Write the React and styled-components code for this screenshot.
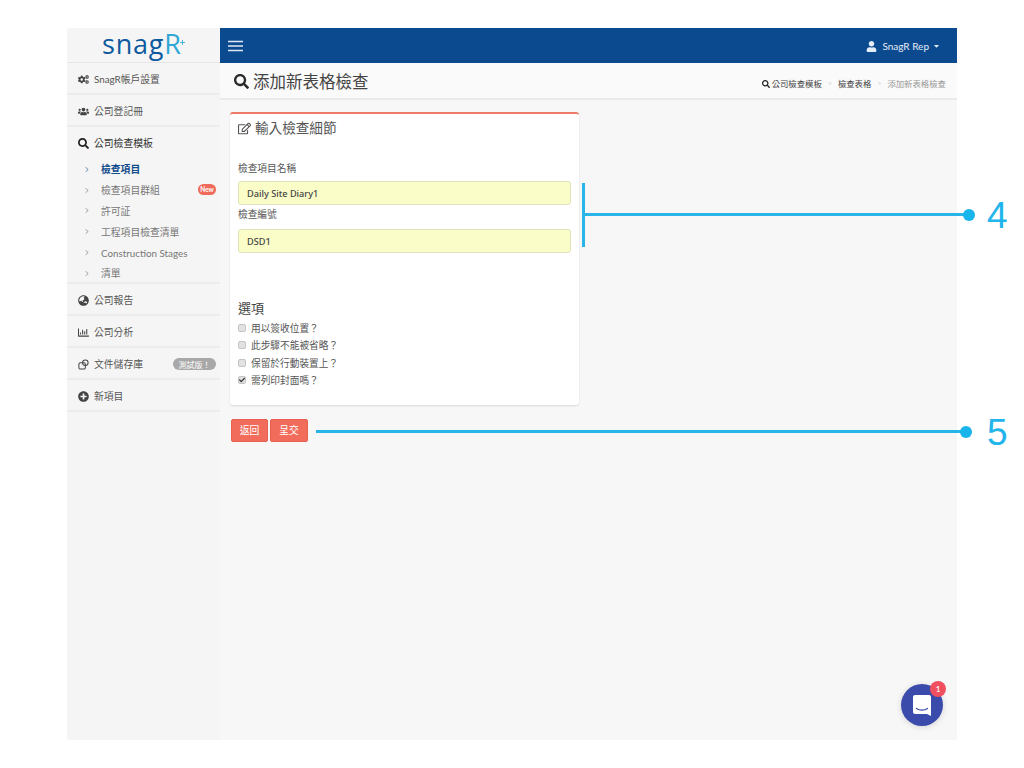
import React from "react";
import styled, { createGlobalStyle } from "styled-components";
import { FaCogs, FaUsers, FaSearch, FaGlobeAsia, FaRegChartBar, FaPlusCircle, FaRegEdit, FaUser, FaCaretDown, FaCheck } from "react-icons/fa";
import { FiChevronRight } from "react-icons/fi";

const Global = createGlobalStyle`
  html, body { margin: 0; padding: 0; background: #fff; }
  body { font-family: Lato, "Noto Sans CJK TC", sans-serif; color: #555; }
  * { box-sizing: border-box; }
`;
const Canvas = styled.div`position: relative; width: 1024px; height: 768px; padding: 28px 67px; overflow: hidden;`;
const Frame = styled.div`display: flex; width: 890px; height: 712px; background: #f7f7f7;`;
const Sidebar = styled.aside`width: 153px; flex: none; background: #f5f5f5;`;
const Logo = styled.div`height: 35px; display: flex; align-items: center; justify-content: center; border-bottom: 1px solid #e6e6e6; padding: 0 0 3px 0;`;
const LogoText = styled.span`font-family: "Open Sans", sans-serif; font-size: 27px; line-height: 30px; letter-spacing: .8px; color: #0d5a9e;`;
const LogoR = styled.span`color: #2fa8d5; letter-spacing: 0;`;
const LogoMark = styled.svg`width: 5px; height: 5px; margin: 0 0 2px -1px; align-self: center;`;
const MenuRow = styled.div`height: 32px; display: flex; align-items: center; padding: ${p => p.$flat ? "0" : "2px"} 0 0 11px; gap: 5px; font-size: 9.8px; color: ${p => p.$dark ? "#333" : "#555"}; border-bottom: ${p => p.$flat ? "none" : "2px solid #ececec"}; position: relative;
  > svg { width: 11px; height: 11px; flex: none; color: ${p => p.$dark ? "#222" : "#444"}; }`;
const SubMenu = styled.div`height: 125px; display: flex; flex-direction: column; border-bottom: 2px solid #ececec;`;
const SubRow = styled.div`height: 20.8px; flex: none; display: flex; align-items: center; padding-left: 16px; gap: 10px; font-size: 9.8px; font-weight: ${p => p.$on ? 700 : 400}; color: ${p => p.$on ? "#0f4a8a" : "#777"}; position: relative;
  svg { width: 8px; height: 9px; color: ${p => p.$on ? "#0f4a8a" : "#666"}; flex: none; }`;
const NewBadge = styled.span`position: absolute; right: 4px; top: 4px; width: 18px; height: 11px; border-radius: 6px; background: #ef6a5a; color: #fff; font-size: 6.5px; font-weight: 700; display: flex; align-items: center; justify-content: center;`;
const BetaBadge = styled.span`position: absolute; right: 4px; top: 10px; width: 43px; height: 12px; border-radius: 6px; background: #a8a8a8; color: #fff; font-size: 8px; font-weight: 400; display: flex; align-items: center; justify-content: center;`;
const Main = styled.main`flex: 1; display: flex; flex-direction: column; min-width: 0;`;
const TopBar = styled.header`height: 35px; background: #0b4a8f; display: flex; align-items: center; justify-content: space-between; padding: 0 17px 0 8px; color: #fff;`;
const Burger = styled.svg`width: 15px; height: 12px; margin-top: 1px; color: #dfe9f5;`;
const UserMenu = styled.div`display: flex; align-items: center; gap: 5px; font-size: 10px; color: #e4edf7; padding-top: 1px;
  svg:first-child { width: 11px; height: 11px; } svg:last-child { width: 7px; height: 8px; margin-left: -1px; }`;
const PageHead = styled.div`height: 37px; background: #fafafa; border-bottom: 2px solid #eaeaea; display: flex; align-items: center; justify-content: space-between; padding: 2px 11px 0 14px;`;
const Title = styled.h1`margin: 0; font-size: 16.5px; font-weight: 400; color: #444; display: flex; align-items: center; gap: 4px; line-height: 24px;
  svg { width: 15px; height: 15px; color: #2b2b2b; }`;
const Crumbs = styled.div`display: flex; align-items: center; font-size: 8.4px; color: #444; gap: 6px; padding-top: 2px;
  svg { width: 8px; height: 8px; color: #222; margin-right: 2px; vertical-align: -1px; }`;
const Sep = styled.span`color: #ccc; font-size: 7px; width: 4px;`;
const CrumbLast = styled.span`color: #999;`;
const Content = styled.div`padding: 12px 0 0 10px; flex: 1;`;
const Card = styled.section`width: 349px; height: 293px; background: #fff; border-top: 2px solid #ec7b69; border-radius: 3px; box-shadow: 0 1px 2px rgba(0,0,0,.12); padding: 4px 8px 0;`;
const CardTitle = styled.h2`margin: 0; font-size: 13.6px; font-weight: 400; color: #555; display: flex; align-items: center; gap: 4px; line-height: 20px;
  svg { width: 13px; height: 13px; color: #555; }`;
const Label = styled.label`display: block; font-size: 9.7px; line-height: 14px; color: #555; margin-top: ${p => p.$mt}px; margin-bottom: ${p => p.$mb}px;`;
const Field = styled.input`display: block; width: 333px; height: 24px; border: 1px solid #e0e2bc; border-radius: 3px; background: #fbfdc8; padding: 0 8px; font: 500 9.2px "Noto Sans", sans-serif; color: #444; outline: none;`;
const Options = styled.h3`margin: 46px 0 2px; font-size: 13px; line-height: 18px; font-weight: 400; color: #444;`;
const CheckRow = styled.div`display: flex; align-items: center; height: 17.5px; gap: 5px; font-size: 9.7px; color: #555;`;
const Box = styled.span`width: 8px; height: 8px; flex: none; border-radius: 2px; background: #e2e2e2; border: 1px solid #c4c4c4; display: flex; align-items: center; justify-content: center;
  svg { width: 6px; height: 6px; color: #333; }`;
const Actions = styled.div`display: flex; gap: 2px; margin: 14px 0 0 1px;`;
const Button = styled.button`width: ${p => p.$w}px; height: 23px; padding: 0 0 1px; background: #f26c5c; border: 1px solid #e8604f; border-radius: 2px; color: #fff; font: 9.8px Lato, "Noto Sans CJK TC", sans-serif;`;
const Chat = styled.div`position: absolute; left: 901px; top: 684px; width: 42px; height: 42px; border-radius: 50%; background: #3b4bab; display: flex; align-items: center; justify-content: center; box-shadow: 0 1px 6px rgba(0,0,0,.15);`;
const ChatIcon = styled.svg`width: 18px; height: 21px;`;
const ChatBadge = styled.span`position: absolute; right: -3px; top: -3px; width: 16px; height: 16px; border-radius: 50%; background: #f0505f; color: #fff; font-size: 8px; font-weight: 600; display: flex; align-items: center; justify-content: center;`;
const Callout = styled.div`position: absolute; background: #29b5e8;`;
const Dot = styled.div`position: absolute; width: 12px; height: 12px; border-radius: 50%; background: #18b4ec;`;
const Num = styled.span`position: absolute; font: 37px/40px "Liberation Sans", sans-serif; color: #22b5ec;`;

const subs = ["檢查項目", "檢查項目群組", "許可証", "工程項目檢查清單", "Construction Stages", "清單"];

const Storage = () => (
  <svg viewBox="0 0 12 12" fill="none" stroke="currentColor" strokeWidth="1.100" aria-hidden="true">
    <rect x="1" y="4" width="7" height="7" rx="1.500" />
    <circle cx="8" cy="4" r="3" />
  </svg>
);

export default function App() {
  return (
    <Canvas>
      <Global />
      <Frame>
        <Sidebar>
          <Logo>
            <LogoText>snag<LogoR>R</LogoR></LogoText>
            <LogoMark viewBox="0 0 6 6" aria-hidden="true"><path d="M3 0v6M0 3h6" stroke="#2fa8d5" strokeWidth="1" /></LogoMark>
          </Logo>
          <MenuRow><FaCogs />SnagR帳戶設置</MenuRow>
          <MenuRow><FaUsers />公司登記冊</MenuRow>
          <MenuRow $dark $flat><FaSearch />公司檢查模板</MenuRow>
          <SubMenu>
            {subs.map((s, i) => (
              <SubRow key={s} $on={i === 0}><FiChevronRight />{s}{i === 1 && <NewBadge>New</NewBadge>}</SubRow>
            ))}
          </SubMenu>
          <MenuRow><FaGlobeAsia />公司報告</MenuRow>
          <MenuRow><FaRegChartBar />公司分析</MenuRow>
          <MenuRow><Storage />文件儲存庫<BetaBadge>測試版！</BetaBadge></MenuRow>
          <MenuRow><FaPlusCircle />新項目</MenuRow>
        </Sidebar>
        <Main>
          <TopBar>
            <Burger viewBox="0 0 15 12" aria-hidden="true">
              <path d="M0 1.500h15M0 6h15M0 10.500h15" stroke="currentColor" strokeWidth="1.400" />
            </Burger>
            <UserMenu><FaUser />SnagR Rep<FaCaretDown /></UserMenu>
          </TopBar>
          <PageHead>
            <Title><FaSearch />添加新表格檢查</Title>
            <Crumbs>
              <span><FaSearch />公司檢查模板</span><Sep>&gt;</Sep>
              <span>檢查表格</span><Sep>&gt;</Sep>
              <CrumbLast>添加新表格檢查</CrumbLast>
            </Crumbs>
          </PageHead>
          <Content>
            <Card>
              <CardTitle><FaRegEdit />輸入檢查細節</CardTitle>
              <Label $mt={23} $mb={6}>檢查項目名稱</Label>
              <Field readOnly value="Daily Site Diary1" />
              <Label $mt={2} $mb={8}>檢查編號</Label>
              <Field readOnly value="DSD1" />
              <Options>選項</Options>
              <CheckRow><Box />用以簽收位置？</CheckRow>
              <CheckRow><Box />此步驟不能被省略？</CheckRow>
              <CheckRow><Box />保留於行動裝置上？</CheckRow>
              <CheckRow><Box><FaCheck /></Box>需列印封面嗎？</CheckRow>
            </Card>
            <Actions>
              <Button $w={37}>返回</Button>
              <Button $w={38}>呈交</Button>
            </Actions>
          </Content>
        </Main>
      </Frame>
      <Callout style={{ left: 582, top: 183, width: 3, height: 64 }} />
      <Callout style={{ left: 584, top: 213, width: 382, height: 3 }} />
      <Dot style={{ left: 963, top: 209 }} />
      <Num style={{ left: 987, top: 196 }}>4</Num>
      <Callout style={{ left: 316, top: 430, width: 646, height: 3 }} />
      <Dot style={{ left: 960, top: 426 }} />
      <Num style={{ left: 987, top: 413 }}>5</Num>
      <Chat>
        <ChatIcon viewBox="0 0 18 21" aria-hidden="true">
          <path d="M2 0h14a2 2 0 0 1 2 2v19l-4-2H2a2 2 0 0 1-2-2V2a2 2 0 0 1 2-2z" fill="#fff" />
          <path d="M3.500 13.500c3 2.200 8 2.200 11 0" fill="none" stroke="#3b4bab" strokeWidth="1.300" strokeLinecap="round" />
        </ChatIcon>
        <ChatBadge>1</ChatBadge>
      </Chat>
    </Canvas>
  );
}
